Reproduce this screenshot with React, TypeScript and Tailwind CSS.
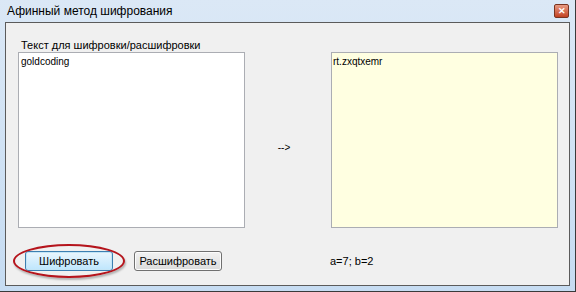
import React from "react";

const font = { fontFamily: '"Liberation Sans", Arial, sans-serif' };

const WinButton: React.FC<{ label: string; focused?: boolean }> = ({
	label,
	focused,
}) => (
	<button
		type="button"
		className={
			focused
				? "flex h-[20px] w-[88px] items-center justify-center rounded-[3px] border border-[#3c7fb1] bg-gradient-to-b from-[#eaf6fd] to-[#bee6fd] text-[11px] text-black shadow-[inset_0_0_0_1px_#c4e5f6]"
				: "flex h-[20px] w-[88px] items-center justify-center rounded-[3px] border border-[#707070] bg-gradient-to-b from-[#f2f2f2] to-[#dcdcdc] text-[11px] text-black shadow-[inset_0_0_0_1px_#fcfcfc]"
		}
	>
		{label}
	</button>
);

export default function App() {
	return (
		<div
			className="flex h-[292px] w-[576px] flex-col border-r border-b border-[#3a3a3a] bg-gradient-to-b from-[#dbe8f6] to-[#c6dcf2] text-black"
			style={font}
		>
			{/* Заголовок окна */}
			<div className="flex h-[22px] shrink-0 items-center justify-between pr-[6px] pl-[7px]">
				<span className="text-[12px] leading-none text-black">
					Афинный метод шифрования
				</span>
				<span className="flex h-[14px] w-[15px] items-center justify-center rounded-[2px] border border-[#7a3420] bg-gradient-to-b from-[#e79a82] to-[#c2401f] text-[9px] leading-none font-bold text-white">
					✕
				</span>
			</div>

			{/* Клиентская область */}
			<div className="mx-[5px] mb-[5px] flex flex-1 flex-col border border-[#5b5b5b] bg-[#f0f0f0] pt-[16px] pr-[11px] pl-[12px]">
				<span className="pl-[3px] text-[11px] leading-[13px]">
					Текст для шифровки/расшифровки
				</span>

				<div className="flex h-[176px]">
					<div className="w-[227px] border border-[#abadb3] bg-white px-[2px] py-[3px] text-[10px] leading-[12px]">
						goldcoding
					</div>
					<div className="flex flex-1 items-center justify-center pt-[14px] pr-[8px] text-[10px]">
						--&gt;
					</div>
					<div className="w-[227px] border border-[#abadb3] bg-[#ffffe1] px-px py-[3px] text-[10px] leading-[12px]">
						rt.zxqtxemr
					</div>
				</div>

				<div className="flex items-center pt-[23px]">
					<div className="relative ml-[7px]">
						<WinButton label="Шифровать" focused />
						<span className="pointer-events-none absolute -top-[7px] -right-[12px] -bottom-[7px] -left-[12px] rounded-[50%] border-2 border-[#b5141c] shadow-[1px_2px_2px_rgba(0,0,0,0.25)]" />
					</div>
					<div className="ml-[21px]">
						<WinButton label="Расшифровать" />
					</div>
					<span className="ml-[108px] text-[11px]">a=7; b=2</span>
				</div>
			</div>
		</div>
	);
}
